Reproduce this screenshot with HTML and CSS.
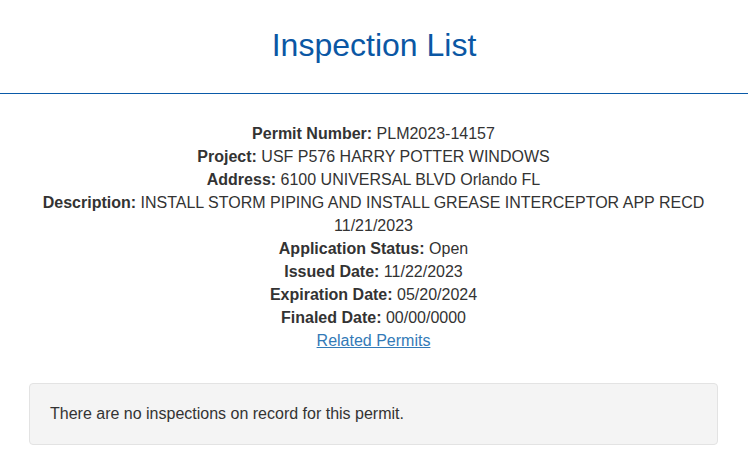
FILE: index.html
```html
<!DOCTYPE html>
<html lang="en">
<head>
  <meta charset="UTF-8" />
  <meta name="viewport" content="width=device-width, initial-scale=1.0" />
  <title>Inspection List</title>
  <link rel="stylesheet" href="styles.css">
</head>
<body>
  <header class="page-header">
    <h1>Inspection List</h1>
  </header>
  <div class="content">
    <div class="permit-info">
      <div><b>Permit Number:</b> PLM2023-14157</div>
      <div><b>Project:</b> USF P576 HARRY POTTER WINDOWS</div>
      <div><b>Address:</b> 6100 UNIVERSAL BLVD Orlando FL</div>
      <div><b>Description:</b> INSTALL STORM PIPING AND INSTALL GREASE INTERCEPTOR APP RECD 11/21/2023</div>
      <div><b>Application Status:</b> Open</div>
      <div><b>Issued Date:</b> 11/22/2023</div>
      <div><b>Expiration Date:</b> 05/20/2024</div>
      <div><b>Finaled Date:</b> 00/00/0000</div>
      <div><a href="#">Related Permits</a></div>
    </div>
    <div class="well">There are no inspections on record for this permit.</div>
  </div>
</body>
</html>
```

FILE: styles.css
```css
body {
  margin: 0;
  padding: 0;
  font-family: "Liberation Sans", Arial, sans-serif;
  color: #333;
  background: #fff;
}
.page-header {
  height: 93px;
  border-bottom: 1px solid #0a5aa8;
  text-align: center;
}
.page-header h1 {
  margin: 0;
  padding-top: 27px;
  font-size: 32px;
  font-weight: normal;
  line-height: 36px;
  color: #0b57a4;
}
.content { padding: 0 30px 0 29px; }
.permit-info {
  margin-top: 28px;
  text-align: center;
  font-size: 16px;
  line-height: 23px;
}
.permit-info a { color: #337ab7; }
.well {
  margin-top: 31px;
  padding: 19px 20px;
  background: #f4f4f4;
  border: 1px solid #e3e3e3;
  border-radius: 4px;
  font-size: 16px;
  line-height: 22px;
}
```
